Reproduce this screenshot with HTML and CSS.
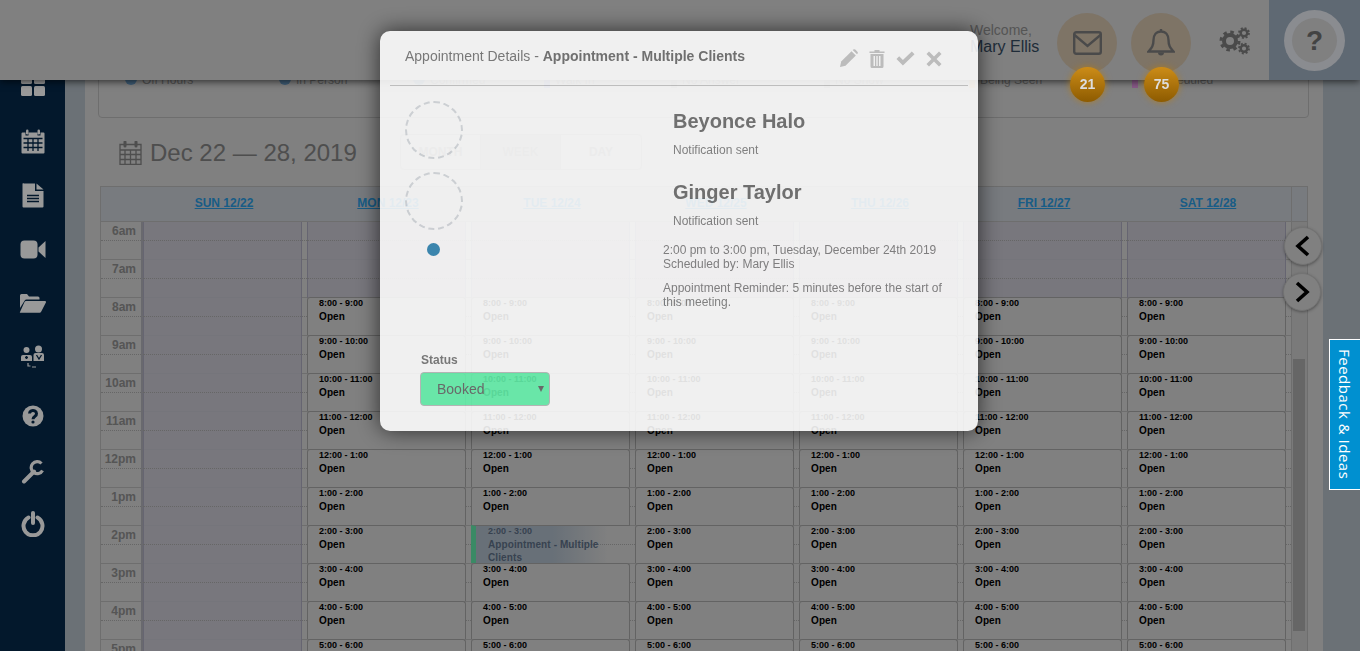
FILE: index.html
```html
<!DOCTYPE html>
<html>
<head>
<meta charset="UTF-8">
<title>Calendar</title>
<link rel="stylesheet" href="styles.css">
</head>
<body>
<div class="app">
  <nav class="sidebar">
    <a class="side-item side-first"><svg width="26" height="24" viewBox="0 0 26 24"><rect x="1" y="1" width="11" height="10" rx="1.5"/><rect x="14" y="1" width="11" height="10" rx="1.5"/><rect x="1" y="13" width="11" height="10" rx="1.5"/><rect x="14" y="13" width="11" height="10" rx="1.5"/></svg></a>
    <a class="side-item"><svg width="24" height="25" viewBox="0 0 24 25"><path d="M1.5 3.5h3v3h3v-3h9v3h3v-3h3a1 1 0 0 1 1 1v19a1 1 0 0 1-1 1h-21a1 1 0 0 1-1-1v-19a1 1 0 0 1 1-1z"/><rect x="5" y="0.5" width="2.5" height="5" rx="1.2"/><rect x="16.5" y="0.5" width="2.5" height="5" rx="1.2"/><path class="cut" d="M2.5 9.5h19M2.5 14h19M2.5 18.5h19M7 9v13M12 9v13M17 9v13"/></svg></a>
    <a class="side-item"><svg width="22" height="25" viewBox="0 0 22 25"><path d="M1.5 0.5h11.5v7.5h8.500v15.500a1 1 0 0 1-1 1h-19a1 1 0 0 1-1-1v-22.500a1 1 0 0 1 1-1z"/><path d="M14.500 0.500l7 6h-7z"/><path class="cut" d="M5 12.500h12M5 15.500h12M5 18.500h12"/></svg></a>
    <a class="side-item"><svg width="26" height="19" viewBox="0 0 26 19"><rect x="0.500" y="0.500" width="17" height="18" rx="4"/><path d="M18.500 7.500l7-6.500v17l-7-6.500z"/></svg></a>
    <a class="side-item"><svg width="27" height="20" viewBox="0 0 27 20"><path d="M1 15V2.500a1.500 1.500 0 0 1 1.500-1.500h5.500l2 2.500h9a1.500 1.500 0 0 1 1.500 1.500v1.500H7.500a2 2 0 0 0-1.800 1.100z"/><path d="M7 8h19a1 1 0 0 1 .9 1.400L22 19a1.500 1.500 0 0 1-1.300.8H1.500a.6.6 0 0 1-.5-.9L5.500 9A1.800 1.800 0 0 1 7 8z"/></svg></a>
    <a class="side-item"><svg width="26" height="24" viewBox="0 0 26 24"><circle cx="6.500" cy="5" r="3"/><circle cx="18.500" cy="4" r="3.500"/><path d="M1 16v-4a2 2 0 0 1 2-2h7a2 2 0 0 1 2 2v4z"/><path d="M13.500 16v-6a2 2 0 0 1 2-2h6.500a2 2 0 0 1 2 2v6z"/><path class="cut" d="M6.500 11v3M5 12.500h3M16.500 10l2.500 4 2.500-4"/><path class="line" d="M8 18v3h2.500M12 22h4"/></svg></a>
    <a class="side-item side-help"><svg width="22" height="22" viewBox="0 0 22 22"><circle cx="11" cy="11" r="10.500"/><path class="cut wide" d="M7.500 8.500a3.500 3.200 0 1 1 5.500 2.800c-1.300.9-2 1.400-2 3"/><circle class="hole" cx="11" cy="17" r="1.600"/></svg></a>
    <a class="side-item side-tool"><svg width="24" height="24" viewBox="0 0 24 24"><path class="line heavy" d="M3 21.500L13 11.500"/><path class="line heavy thin" d="M20.500 3.500A6 6 0 1 0 21.500 10.500"/></svg></a>
    <a class="side-item side-power"><svg width="24" height="26" viewBox="0 0 24 26"><path class="line heavy" d="M7.500 6.500a9.500 9.500 0 1 0 9 0"/><path class="line heavy" d="M12 2v10"/></svg></a>
  </nav>

  <main class="main">
    <div class="content">
      <section class="legend">
        <span class="legend-item"><i class="dot"></i>Off Hours</span>
        <span class="legend-item"><i class="dot"></i>In Person</span>
        <span class="legend-item"><i class="dot"></i>Confirmed</span>
        <span class="legend-item"><i class="sq sq-walk"></i>Walk In</span>
        <span class="legend-item"><i class="sq sq-grey"></i>No Answer</span>
        <span class="legend-item"><i class="sq sq-grey"></i>No Show</span>
        <span class="legend-item"><i class="sq sq-seen"></i>Being Seen</span>
        <span class="legend-item"><i class="sq sq-resch"></i>Rescheduled</span>
      </section>

      <div class="date-row">
        <h1 class="date-title">
          <svg width="23" height="24" viewBox="0 0 23 24"><path d="M1 3.500h21v20H1zM1 9h21M1 13.500h21M1 18.500h21M6 9v14.500M11.500 9v14.500M17 9v14.500"/><path d="M6 1v4M17 1v4" class="ring"/></svg>
          Dec 22 — 28, 2019
        </h1>
        <div class="views">
          <span class="view">MONTH</span>
          <span class="view view-on">WEEK</span>
          <span class="view">DAY</span>
        </div>
      </div>

      <section class="week">
        <div class="week-head">
          <div class="head-time"></div>
          <a class="head-day">SUN 12/22</a>
          <a class="head-day">MON 12/23</a>
          <a class="head-day">TUE 12/24</a>
          <a class="head-day">WED 12/25</a>
          <a class="head-day">THU 12/26</a>
          <a class="head-day">FRI 12/27</a>
          <a class="head-day">SAT 12/28</a>
          <div class="head-bar"></div>
        </div>
        <div class="week-body">
          <div class="times">
            <div class="hour">6am</div><div class="hour">7am</div><div class="hour">8am</div><div class="hour">9am</div>
            <div class="hour">10am</div><div class="hour">11am</div><div class="hour">12pm</div><div class="hour">1pm</div>
            <div class="hour">2pm</div><div class="hour">3pm</div><div class="hour">4pm</div><div class="hour">5pm</div>
          </div>

          <!-- sun -->
          <div class="day">
            <div class="cell"><div class="off"></div></div><div class="cell"><div class="off"></div></div>
            <div class="cell"><div class="off"></div></div><div class="cell"><div class="off"></div></div>
            <div class="cell"><div class="off"></div></div><div class="cell"><div class="off"></div></div>
            <div class="cell"><div class="off"></div></div><div class="cell"><div class="off"></div></div>
            <div class="cell"><div class="off"></div></div><div class="cell"><div class="off"></div></div>
            <div class="cell"><div class="off"></div></div><div class="cell"><div class="off"></div></div>
          </div>

          <!-- mon -->
          <div class="day">
            <div class="cell"><div class="off"></div></div><div class="cell"><div class="off"></div></div>
            <div class="cell"><div class="slot"><b>8:00 - 9:00</b>Open</div></div>
            <div class="cell"><div class="slot"><b>9:00 - 10:00</b>Open</div></div>
            <div class="cell"><div class="slot"><b>10:00 - 11:00</b>Open</div></div>
            <div class="cell"><div class="slot"><b>11:00 - 12:00</b>Open</div></div>
            <div class="cell"><div class="slot"><b>12:00 - 1:00</b>Open</div></div>
            <div class="cell"><div class="slot"><b>1:00 - 2:00</b>Open</div></div>
            <div class="cell"><div class="slot"><b>2:00 - 3:00</b>Open</div></div>
            <div class="cell"><div class="slot"><b>3:00 - 4:00</b>Open</div></div>
            <div class="cell"><div class="slot"><b>4:00 - 5:00</b>Open</div></div>
            <div class="cell"><div class="slot"><b>5:00 - 6:00</b>Open</div></div>
          </div>

          <!-- tue -->
          <div class="day">
            <div class="cell"><div class="off"></div></div><div class="cell"><div class="off"></div></div>
            <div class="cell"><div class="slot"><b>8:00 - 9:00</b>Open</div></div>
            <div class="cell"><div class="slot"><b>9:00 - 10:00</b>Open</div></div>
            <div class="cell"><div class="slot"><b>10:00 - 11:00</b>Open</div></div>
            <div class="cell"><div class="slot"><b>11:00 - 12:00</b>Open</div></div>
            <div class="cell"><div class="slot"><b>12:00 - 1:00</b>Open</div></div>
            <div class="cell"><div class="slot"><b>1:00 - 2:00</b>Open</div></div>
            <div class="cell"><div class="slot slot-event"><b>2:00 - 3:00</b>Appointment - Multiple Clients</div></div>
            <div class="cell"><div class="slot"><b>3:00 - 4:00</b>Open</div></div>
            <div class="cell"><div class="slot"><b>4:00 - 5:00</b>Open</div></div>
            <div class="cell"><div class="slot"><b>5:00 - 6:00</b>Open</div></div>
          </div>

          <!-- wed -->
          <div class="day">
            <div class="cell"><div class="off"></div></div><div class="cell"><div class="off"></div></div>
            <div class="cell"><div class="slot"><b>8:00 - 9:00</b>Open</div></div>
            <div class="cell"><div class="slot"><b>9:00 - 10:00</b>Open</div></div>
            <div class="cell"><div class="slot"><b>10:00 - 11:00</b>Open</div></div>
            <div class="cell"><div class="slot"><b>11:00 - 12:00</b>Open</div></div>
            <div class="cell"><div class="slot"><b>12:00 - 1:00</b>Open</div></div>
            <div class="cell"><div class="slot"><b>1:00 - 2:00</b>Open</div></div>
            <div class="cell"><div class="slot"><b>2:00 - 3:00</b>Open</div></div>
            <div class="cell"><div class="slot"><b>3:00 - 4:00</b>Open</div></div>
            <div class="cell"><div class="slot"><b>4:00 - 5:00</b>Open</div></div>
            <div class="cell"><div class="slot"><b>5:00 - 6:00</b>Open</div></div>
          </div>

          <!-- thu -->
          <div class="day">
            <div class="cell"><div class="off"></div></div><div class="cell"><div class="off"></div></div>
            <div class="cell"><div class="slot"><b>8:00 - 9:00</b>Open</div></div>
            <div class="cell"><div class="slot"><b>9:00 - 10:00</b>Open</div></div>
            <div class="cell"><div class="slot"><b>10:00 - 11:00</b>Open</div></div>
            <div class="cell"><div class="slot"><b>11:00 - 12:00</b>Open</div></div>
            <div class="cell"><div class="slot"><b>12:00 - 1:00</b>Open</div></div>
            <div class="cell"><div class="slot"><b>1:00 - 2:00</b>Open</div></div>
            <div class="cell"><div class="slot"><b>2:00 - 3:00</b>Open</div></div>
            <div class="cell"><div class="slot"><b>3:00 - 4:00</b>Open</div></div>
            <div class="cell"><div class="slot"><b>4:00 - 5:00</b>Open</div></div>
            <div class="cell"><div class="slot"><b>5:00 - 6:00</b>Open</div></div>
          </div>

          <!-- fri -->
          <div class="day">
            <div class="cell"><div class="off"></div></div><div class="cell"><div class="off"></div></div>
            <div class="cell"><div class="slot"><b>8:00 - 9:00</b>Open</div></div>
            <div class="cell"><div class="slot"><b>9:00 - 10:00</b>Open</div></div>
            <div class="cell"><div class="slot"><b>10:00 - 11:00</b>Open</div></div>
            <div class="cell"><div class="slot"><b>11:00 - 12:00</b>Open</div></div>
            <div class="cell"><div class="slot"><b>12:00 - 1:00</b>Open</div></div>
            <div class="cell"><div class="slot"><b>1:00 - 2:00</b>Open</div></div>
            <div class="cell"><div class="slot"><b>2:00 - 3:00</b>Open</div></div>
            <div class="cell"><div class="slot"><b>3:00 - 4:00</b>Open</div></div>
            <div class="cell"><div class="slot"><b>4:00 - 5:00</b>Open</div></div>
            <div class="cell"><div class="slot"><b>5:00 - 6:00</b>Open</div></div>
          </div>

          <!-- sat -->
          <div class="day">
            <div class="cell"><div class="off"></div></div><div class="cell"><div class="off"></div></div>
            <div class="cell"><div class="slot"><b>8:00 - 9:00</b>Open</div></div>
            <div class="cell"><div class="slot"><b>9:00 - 10:00</b>Open</div></div>
            <div class="cell"><div class="slot"><b>10:00 - 11:00</b>Open</div></div>
            <div class="cell"><div class="slot"><b>11:00 - 12:00</b>Open</div></div>
            <div class="cell"><div class="slot"><b>12:00 - 1:00</b>Open</div></div>
            <div class="cell"><div class="slot"><b>1:00 - 2:00</b>Open</div></div>
            <div class="cell"><div class="slot"><b>2:00 - 3:00</b>Open</div></div>
            <div class="cell"><div class="slot"><b>3:00 - 4:00</b>Open</div></div>
            <div class="cell"><div class="slot"><b>4:00 - 5:00</b>Open</div></div>
            <div class="cell"><div class="slot"><b>5:00 - 6:00</b>Open</div></div>
          </div>

          <div class="scroll"><div class="scroll-thumb"></div></div>
        </div>
      </section>
    </div>
  </main>
</div>

<button class="nav-btn nav-prev"><svg width="18" height="24" viewBox="0 0 18 24"><path d="M14 3L4 12l10 9"/></svg></button>
<button class="nav-btn nav-next"><svg width="18" height="24" viewBox="0 0 18 24"><path d="M4 3l10 9-10 9"/></svg></button>

<header class="topbar">
  <div class="welcome">Welcome,<strong>Mary Ellis</strong></div>
  <a class="round">
    <svg width="29" height="24" viewBox="0 0 29 24"><rect x="1.200" y="1.200" width="26.600" height="21.600" rx="2"/><path d="M1.500 4l13 11 13-11"/></svg>
    <span class="badge">21</span>
  </a>
  <a class="round">
    <svg width="28" height="30" viewBox="0 0 28 30"><path d="M14 3.500c-5 0-7.500 3.800-7.500 8.500 0 6-2 8-5 11.500h25c-3-3.500-5-5.500-5-11.500 0-4.700-2.500-8.500-7.500-8.500zM14 1v2.500"/><path d="M11 24.500a3 3 0 0 0 6 0" class="fill"/></svg>
    <span class="badge">75</span>
  </a>
  <a class="gears">
    <svg width="32" height="28" viewBox="0 0 32 28"><circle cx="11" cy="14" r="6" class="g-ring" stroke-width="4"/><circle cx="11" cy="14" r="9" class="g-teeth" stroke-width="3" stroke-dasharray="3.500 3.570"/><circle cx="25" cy="6" r="3.300" class="g-ring" stroke-width="2.400"/><circle cx="25" cy="6" r="5" class="g-teeth" stroke-width="1.800" stroke-dasharray="2 1.930"/><circle cx="25" cy="21.500" r="3.300" class="g-ring" stroke-width="2.400"/><circle cx="25" cy="21.500" r="5" class="g-teeth" stroke-width="1.800" stroke-dasharray="2 1.930"/></svg>
  </a>
  <div class="help-box"><div class="help-ring"><span class="help-core">?</span></div></div>
</header>

<div class="scrim"></div>

<a class="feedback">Feedback &amp; Ideas</a>

<div class="modal">
  <div class="modal-head">
    <div class="modal-title">Appointment Details - <b>Appointment - Multiple Clients</b></div>
    <div class="modal-tools">
      <svg width="19" height="19" viewBox="0 0 19 19"><path d="M1 18l1.200-5.500L12.500 2.200l4.300 4.300L6.500 16.800z"/><path d="M13.700 1l.6-.4a1.500 1.500 0 0 1 2 0l2.100 2.100a1.500 1.500 0 0 1 0 2l-.4.600z"/></svg>
      <svg width="16" height="19" viewBox="0 0 16 19"><path d="M5.500 2.500V1h5v1.500h5V4H.500V2.500z"/><path fill-rule="evenodd" d="M1.500 5h13v12.500a1.500 1.500 0 0 1-1.500 1.500H3a1.500 1.500 0 0 1-1.500-1.500zM4.500 7v10H6V7zM7.300 7v10h1.400V7zM10 7v10h1.500V7z"/></svg>
      <svg width="19" height="15" viewBox="0 0 19 15"><path d="M0.500 8l2.700-2.700 3.700 3.700L15.800.5l2.700 2.700L6.900 14.500z"/></svg>
      <svg width="16" height="16" viewBox="0 0 16 16"><path d="M3 0.500l5 5 5-5 2.500 2.500-5 5 5 5-2.500 2.500-5-5-5 5L.500 13l5-5-5-5z"/></svg>
    </div>
  </div>
  <div class="modal-body">
    <div class="modal-left">
      <div class="photo"></div>
      <div class="photo"></div>
      <div class="status-dot"></div>
      <div class="status">
        <label class="status-label" for="status">Status</label>
        <div class="select-wrap">
          <select id="status" class="status-select"><option>Booked</option></select>
        </div>
      </div>
    </div>
    <div class="modal-right">
      <div class="client">
        <h2>Beyonce Halo</h2>
        <p>Notification sent</p>
      </div>
      <div class="client">
        <h2>Ginger Taylor</h2>
        <p>Notification sent</p>
      </div>
      <p class="info">2:00 pm to 3:00 pm, Tuesday, December 24th 2019<br>Scheduled by: Mary Ellis</p>
      <p class="info">Appointment Reminder: 5 minutes before the start of this meeting.</p>
    </div>
  </div>
</div>
</body>
</html>
```

FILE: styles.css
```css
* { box-sizing: border-box; }

body {
  margin: 0;
  height: 651px;
  overflow: hidden;
  font-family: "Liberation Sans", Arial, sans-serif;
  background: #d5d5d5;
}

.app { display: flex; height: 651px; overflow: hidden; }

/* left nav */
.sidebar {
  width: 65px;
  flex: none;
  padding-top: 56px;
  background: #05284a;
}
.side-item {
  display: flex;
  align-items: center;
  justify-content: center;
  height: 54px;
}
.side-first { height: 58px; }
.side-item svg { fill: #fff; }
.side-item .cut { fill: none; stroke: #05284a; stroke-width: 1.300; }
.side-item .cut.wide { stroke-width: 3; }
.side-item .hole { fill: #05284a; }
.side-item .line { fill: none; stroke: #fff; stroke-width: 1.200; }
.side-item .heavy { stroke-width: 4; stroke-linecap: round; }
.side-item .thin { stroke-width: 3.200; stroke-linecap: butt; }
.side-help { margin-top: 5px; }
.side-tool { margin-top: 2px; }
.side-power { margin-top: -2px; }

.main {
  flex: 1;
  min-width: 0;
  padding: 0 37px 0 20px;
  background: #b2bcc5;
}
.content {
  height: 900px;
  padding: 50px 14px 0 13px;
  background: #d5d5d5;
}

/* legend, mostly under the top bar */
.legend {
  display: grid;
  grid-template-columns: 154px 134px 131px 127px 153px 145px 163px 1fr;
  height: 68px;
  padding: 22px 0 0 26px;
  border: 1px solid #b8b8b8;
  border-radius: 4px;
  font-size: 12px;
  line-height: 14px;
  color: #8e8e8e;
}
.legend-item { display: flex; align-items: flex-start; white-space: nowrap; }
.dot {
  width: 12px;
  height: 12px;
  margin: 0 5px 0 0;
  border-radius: 50%;
  background: #6a9dc8;
}
.sq { width: 6px; height: 13px; margin: 2px 5px 0 0; }
.sq-walk { background: #8f9be0; }
.sq-grey { background: #b4b4b4; }
.sq-seen { background: #e8b878; }
.sq-resch { background: #e496e4; }

.date-row {
  display: flex;
  align-items: center;
  height: 68px;
  padding-left: 21px;
}
.date-title {
  display: flex;
  align-items: center;
  gap: 8px;
  width: 281px;
  margin: 2px 0 0;
  font-size: 24px;
  font-weight: normal;
  color: #828282;
  white-space: nowrap;
}
.date-title svg { fill: none; stroke: #828282; stroke-width: 1.300; }
.date-title .ring { stroke-width: 3; stroke-linecap: round; }

.views { display: flex; height: 36px; border: 1px solid #b8b8b8; border-radius: 4px; }
.view {
  display: flex;
  align-items: center;
  justify-content: center;
  width: 80px;
  border-right: 1px solid #b8b8b8;
  font-size: 12px;
  font-weight: bold;
  color: #999;
}
.view:last-child { border-right: 0; }
.view-on { background: #c4c4c4; }

/* week grid */
.week {
  width: 1208px;
  margin-left: 2px;
  border: 1px solid #b8b8b8;
  border-bottom: 0;
}
.week-head {
  display: flex;
  height: 35px;
  background: #c8cdd4;
  border-bottom: 1px solid #b8b8b8;
}
.head-time { width: 41px; flex: none; }
.head-day {
  width: 164px;
  flex: none;
  padding-top: 9px;
  text-align: center;
  font-size: 12px;
  font-weight: bold;
  color: #2a9ae0;
  text-decoration: underline;
}
.head-bar { flex: 1; margin-left: 1px; border-left: 1px solid #b8b8b8; }

.week-body { display: flex; }
.times { width: 42px; flex: none; border-right: 2px solid #b0b0b8; }
.hour {
  position: relative;
  height: 38px;
  padding: 1px 5px 0 0;
  border-bottom: 1px solid #b8b8b8;
  text-align: right;
  font-size: 12px;
  font-weight: bold;
  line-height: 16px;
  color: #8e8e8e;
}
.hour::after,
.cell::before {
  content: "";
  position: absolute;
  left: 0;
  right: 0;
  top: 18px;
  border-top: 1px dotted #aaa;
}

.day { width: 164px; flex: none; }
.cell {
  position: relative;
  display: flow-root;
  height: 38px;
  padding-right: 5px;
  border-bottom: 1px solid #b8b8b8;
}
.off {
  height: 38px;
  margin-bottom: -1px;
  border-left: 1px solid #aaa9bc;
  border-right: 1px solid #aaa9bc;
  background: rgba(197, 196, 208, 0.85);
}
.slot {
  position: relative;
  height: 38px;
  margin-top: -1px;
  padding: 0 0 0 11px;
  border: 1px solid #a6a6a6;
  border-bottom: 0;
  border-radius: 3px 3px 0 0;
  background: #d5d5d5;
  font-size: 10px;
  font-weight: bold;
  line-height: 13px;
  letter-spacing: 0.1px;
  color: #000;
  overflow: hidden;
}
.slot b { display: block; margin-bottom: 1px; font-size: 9px; line-height: 11px; letter-spacing: 0; }
.slot-event {
  padding-left: 12px;
  border: 0;
  border-top: 1px solid #a6a6a6;
  border-left: 5px solid #62e6a8;
  border-radius: 0;
  color: #5d6f86;
  background: linear-gradient(90deg, #aebbc8 0, #aebbc8 50%, rgba(174, 187, 200, 0) 85%);
}

.scroll { flex: 1; padding: 137px 2px 0 1px; background: #ccc; border-left: 1px solid #b8b8b8; }
.scroll-thumb { height: 272px; background: #aaa; }

/* things lying over the page */
.nav-btn {
  position: absolute;
  width: 38px;
  height: 38px;
  padding: 0;
  display: flex;
  align-items: center;
  justify-content: center;
  border: 1px solid #c0c0c0;
  border-radius: 50%;
  background: #d5d5d5;
  box-shadow: 0 1px 3px rgba(0, 0, 0, 0.35);
}
.nav-btn svg { fill: none; stroke: #000; stroke-width: 3.600; }
.nav-prev { left: 1284px; top: 227px; }
.nav-next { left: 1283px; top: 273px; }

.topbar {
  position: absolute;
  left: 0;
  top: 0;
  right: 0;
  height: 80px;
  display: flex;
  justify-content: flex-end;
  background: #d5d5d5;
  box-shadow: 0 2px 7px rgba(0, 0, 0, 0.6);
}
.welcome {
  width: 87px;
  padding-top: 23px;
  font-size: 14px;
  line-height: 15px;
  color: #8e8e8e;
}
.welcome strong {
  display: block;
  font-size: 16px;
  line-height: 17px;
  font-weight: normal;
  color: #344a60;
}
.round {
  position: relative;
  width: 60px;
  height: 60px;
  margin: 13px 14px 0 0;
  display: flex;
  align-items: center;
  justify-content: center;
  border-radius: 50%;
  background: #d2c1aa;
}
.round svg { fill: none; stroke: #7c7c7c; stroke-width: 2.400; }
.round .fill { fill: #7c7c7c; stroke: none; }
.badge {
  position: absolute;
  left: 13px;
  top: 54px;
  z-index: 60;
  width: 35px;
  height: 35px;
  border-radius: 50%;
  background: linear-gradient(180deg, #cc8c18, #8d5b00);
  box-shadow: 0 0 7px rgba(190, 125, 10, 0.7);
  text-align: center;
  font-size: 14px;
  font-weight: bold;
  line-height: 35px;
  color: #ddd;
}
.gears { width: 64px; padding: 27px 0 0 14px; }
.gears svg { fill: none; stroke: #7c7c7c; }
.help-box {
  width: 91px;
  flex: none;
  padding: 10px 0 0 15px;
  background: #9eafc0;
}
.help-ring {
  width: 61px;
  height: 61px;
  padding: 8px;
  border-radius: 50%;
  background: #e6e9f0;
}
.help-core {
  display: block;
  height: 45px;
  border-radius: 50%;
  background: #d5d5d5;
  text-align: center;
  font-size: 28px;
  font-weight: bold;
  line-height: 45px;
  color: #707070;
}

.scrim {
  position: fixed;
  left: 0;
  top: 0;
  right: 0;
  bottom: 0;
  z-index: 50;
  background: rgba(0, 0, 0, 0.4);
}

.feedback {
  position: fixed;
  right: 0;
  top: 339px;
  z-index: 60;
  width: 31px;
  height: 151px;
  display: flex;
  align-items: center;
  justify-content: center;
  border: 1px solid #fff;
  border-right: 0;
  background: #0090d0;
  writing-mode: vertical-rl;
  font-family: "Open Sans", sans-serif;
  font-size: 15px;
  letter-spacing: 0.5px;
  color: #fff;
}

/* appointment dialog */
.modal {
  position: fixed;
  left: 380px;
  top: 31px;
  z-index: 70;
  width: 598px;
  height: 400px;
  display: flex;
  flex-direction: column;
  padding: 0 10px;
  border-radius: 10px;
  background: #fff;
  opacity: 0.88;
  box-shadow: 0 0 22px rgba(0, 0, 0, 0.75);
  color: #808080;
}
.modal-head {
  display: flex;
  align-items: flex-start;
  height: 55px;
  padding: 17px 0 0 15px;
  border-bottom: 1px solid #c8c8c8;
}
.modal-title { flex: 1; font-size: 14px; line-height: 16px; color: #777; }
.modal-title b { color: #6e6e6e; }
.modal-tools {
  display: flex;
  align-items: center;
  gap: 11px;
  height: 19px;
  margin: 1px 26px 0 0;
}
.modal-tools svg { fill: #c4c4c4; }

.modal-body { flex: 1; display: flex; min-height: 0; }
.modal-left {
  width: 273px;
  flex: none;
  display: flex;
  flex-direction: column;
  padding: 15px 0 25px 15px;
}
.photo {
  width: 58px;
  height: 58px;
  margin-bottom: 13px;
  border: 2px dashed #d6dade;
  border-radius: 50%;
}
.status-dot {
  width: 13px;
  height: 13px;
  margin: 0 0 0 22px;
  border-radius: 50%;
  background: #3388b4;
}
.status { margin: auto 0 0 15px; }
.status-label {
  display: block;
  margin: 0 0 5px 1px;
  font-size: 12px;
  font-weight: bold;
  line-height: 14px;
  color: #777;
}
.select-wrap { position: relative; width: 130px; }
.select-wrap::after {
  content: "";
  position: absolute;
  right: 6px;
  top: 14px;
  border-left: 3px solid transparent;
  border-right: 3px solid transparent;
  border-top: 6px solid #666;
}
.status-select {
  width: 130px;
  height: 34px;
  padding: 0 0 0 16px;
  appearance: none;
  -webkit-appearance: none;
  border: 1px solid #bbb;
  border-radius: 4px;
  background: #66f4ae;
  font-family: inherit;
  font-size: 14px;
  color: #666;
}

.modal-right { flex: 1; padding: 23px 26px 0 0; }
.client { padding-left: 10px; margin-bottom: 23px; }
.client h2 {
  margin: 0 0 10px;
  font-size: 20px;
  line-height: 24px;
  color: #6e6e6e;
}
.client p { margin: 0; font-size: 12px; line-height: 14px; }
.client:nth-child(2) { margin-bottom: 15px; }
.info { margin: 0 0 10px; font-size: 12px; line-height: 14px; }
```
